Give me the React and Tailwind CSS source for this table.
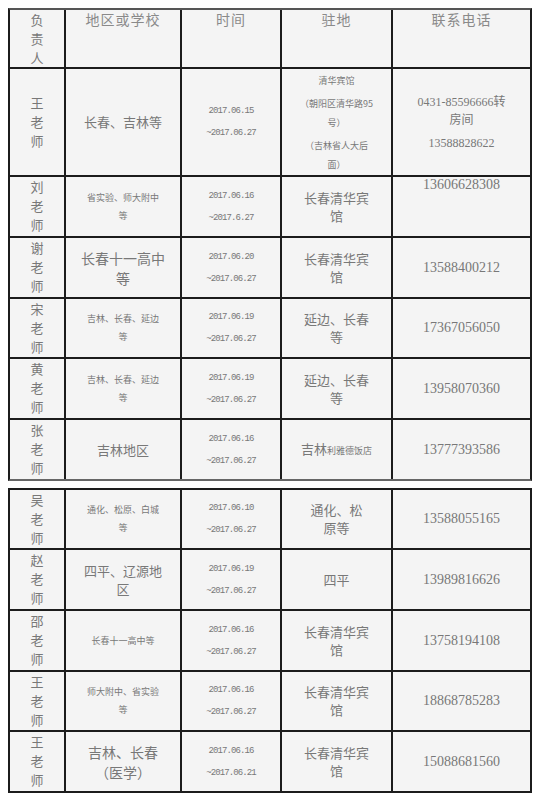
const cjk = "font-['Noto_Sans_CJK_SC',sans-serif]";
const serif = "font-['Liberation_Serif','Noto_Sans_CJK_SC',serif]";
const mono = "font-['Liberation_Mono',monospace]";

const Lines = ({ lines, size = "text-[13px]", lead = "leading-[18px]" }) => (
  <div className={`${cjk} ${size} ${lead}`}>
    {lines.map((l, i) => (
      <div key={i}>{l}</div>
    ))}
  </div>
);

const Big = ({ lines }) => <Lines lines={lines} />;
const Small = ({ lines }) => <Lines lines={lines} size="text-[9px]" />;
const Large = ({ lines }) => <Lines lines={lines} size="text-[14px]" lead="leading-[20px]" />;

const Dates = ({ from, to }) => (
  <div className={`${mono} text-[9px] tracking-[-0.9px] leading-[22px]`}>
    <div>{from}</div>
    <div>~{to}</div>
  </div>
);

const Phone = ({ n }) => <div className={`${serif} text-[14px] leading-[16px]`}>{n}</div>;

const Cell = ({ children, top }) => (
  <div
    className={`flex flex-col items-center bg-[#f4f4f4] text-center text-[#787878] ${
      top ? "justify-start" : "justify-center"
    }`}
  >
    {children}
  </div>
);

const Name = ({ name }) => (
  <Cell>
    <div className={`${cjk} text-[13px] leading-[19px] -mt-[2px]`}>
      {name.split("").map((c, i) => (
        <div key={i}>{c}</div>
      ))}
    </div>
  </Cell>
);

const Row = ({ r }) => (
  <>
    <Name name={r.name} />
    <Cell>{r.region}</Cell>
    <Cell>
      <Dates from={r.from} to={r.to} />
    </Cell>
    <Cell>{r.place}</Cell>
    <Cell top={r.phoneTop}>{r.phone}</Cell>
  </>
);

const hotel = <Big lines={["长春清华宾", "馆"]} />;

const rows1 = [
  {
    name: "王老师",
    region: <Big lines={["长春、吉林等"]} />,
    from: "2017.06.15",
    to: "2017.06.27",
    place: (
      <div className={`${cjk} text-[9px] leading-[19px] flex flex-col gap-[4px]`}>
        <div>清华宾馆</div>
        <div>
          （朝阳区清华路95
          <br />
          号）
        </div>
        <div>
          （吉林省人大后
          <br />
          面）
        </div>
      </div>
    ),
    phone: (
      <div className="flex flex-col gap-[5px]">
        <div className={`${serif} text-[12px] leading-[18px]`}>
          0431-85596666转
          <br />
          房间
        </div>
        <div className={`${serif} text-[12px] leading-[18px]`}>13588828622</div>
      </div>
    ),
  },
  {
    name: "刘老师",
    region: <Small lines={["省实验、师大附中", "等"]} />,
    from: "2017.06.16",
    to: "2017.6.27",
    place: hotel,
    phone: <Phone n="13606628308" />,
    phoneTop: true,
  },
  {
    name: "谢老师",
    region: <Large lines={["长春十一高中", "等"]} />,
    from: "2017.06.20",
    to: "2017.06.27",
    place: hotel,
    phone: <Phone n="13588400212" />,
  },
  {
    name: "宋老师",
    region: <Small lines={["吉林、长春、延边", "等"]} />,
    from: "2017.06.19",
    to: "2017.06.27",
    place: <Big lines={["延边、长春", "等"]} />,
    phone: <Phone n="17367056050" />,
  },
  {
    name: "黄老师",
    region: <Small lines={["吉林、长春、延边", "等"]} />,
    from: "2017.06.19",
    to: "2017.06.27",
    place: <Big lines={["延边、长春", "等"]} />,
    phone: <Phone n="13958070360" />,
  },
  {
    name: "张老师",
    region: <Big lines={["吉林地区"]} />,
    from: "2017.06.16",
    to: "2017.06.27",
    place: (
      <div className={`${cjk} text-[13px] leading-[18px]`}>
        吉林<span className="text-[9px]">利雅德饭店</span>
      </div>
    ),
    phone: <Phone n="13777393586" />,
  },
];

const rows2 = [
  {
    name: "吴老师",
    region: <Small lines={["通化、松原、白城", "等"]} />,
    from: "2017.06.10",
    to: "2017.06.27",
    place: <Big lines={["通化、松", "原等"]} />,
    phone: <Phone n="13588055165" />,
  },
  {
    name: "赵老师",
    region: <Big lines={["四平、辽源地", "区"]} />,
    from: "2017.06.19",
    to: "2017.06.27",
    place: <Big lines={["四平"]} />,
    phone: <Phone n="13989816626" />,
  },
  {
    name: "邵老师",
    region: <Small lines={["长春十一高中等"]} />,
    from: "2017.06.16",
    to: "2017.06.27",
    place: hotel,
    phone: <Phone n="13758194108" />,
  },
  {
    name: "王老师",
    region: <Small lines={["师大附中、省实验", "等"]} />,
    from: "2017.06.16",
    to: "2017.06.27",
    place: hotel,
    phone: <Phone n="18868785283" />,
  },
  {
    name: "王老师",
    region: <Large lines={["吉林、长春", "（医学）"]} />,
    from: "2017.06.16",
    to: "2017.06.21",
    place: hotel,
    phone: <Phone n="15088681560" />,
  },
];

const headers = ["地区或学校", "时间", "驻地", "联系电话"];

export default function App() {
  return (
    <div className="min-h-[800px] w-[539px] bg-white pl-[8px] pt-[8px]">
      {/* first table */}
      <div className="grid w-[524px] grid-cols-[54px_114px_98px_109px_137px] grid-rows-[57px_106px_59px_59px_58px_59px_59px] gap-[2px] border-2 border-[#1c1c1c] border-t-[#555] border-b-[#666] bg-[#1c1c1c]">
        <Cell top>
          <div className={`${cjk} text-[13px] leading-[19px]`}>
            <div>负</div>
            <div>责</div>
            <div>人</div>
          </div>
        </Cell>
        {headers.map((h) => (
          <Cell key={h} top>
            <div className={`${cjk} text-[14px] leading-[18px] tracking-[1px] text-[#8a8a8a]`}>{h}</div>
          </Cell>
        ))}
        {rows1.map((r, i) => (
          <Row key={i} r={r} />
        ))}
      </div>

      {/* second table */}
      <div className="mt-[7px] grid w-[524px] grid-cols-[54px_114px_98px_109px_137px] grid-rows-[58px_59px_59px_58px_59px] gap-[2px] border-2 border-[#1c1c1c] bg-[#1c1c1c]">
        {rows2.map((r, i) => (
          <Row key={i} r={r} />
        ))}
      </div>
    </div>
  );
}
